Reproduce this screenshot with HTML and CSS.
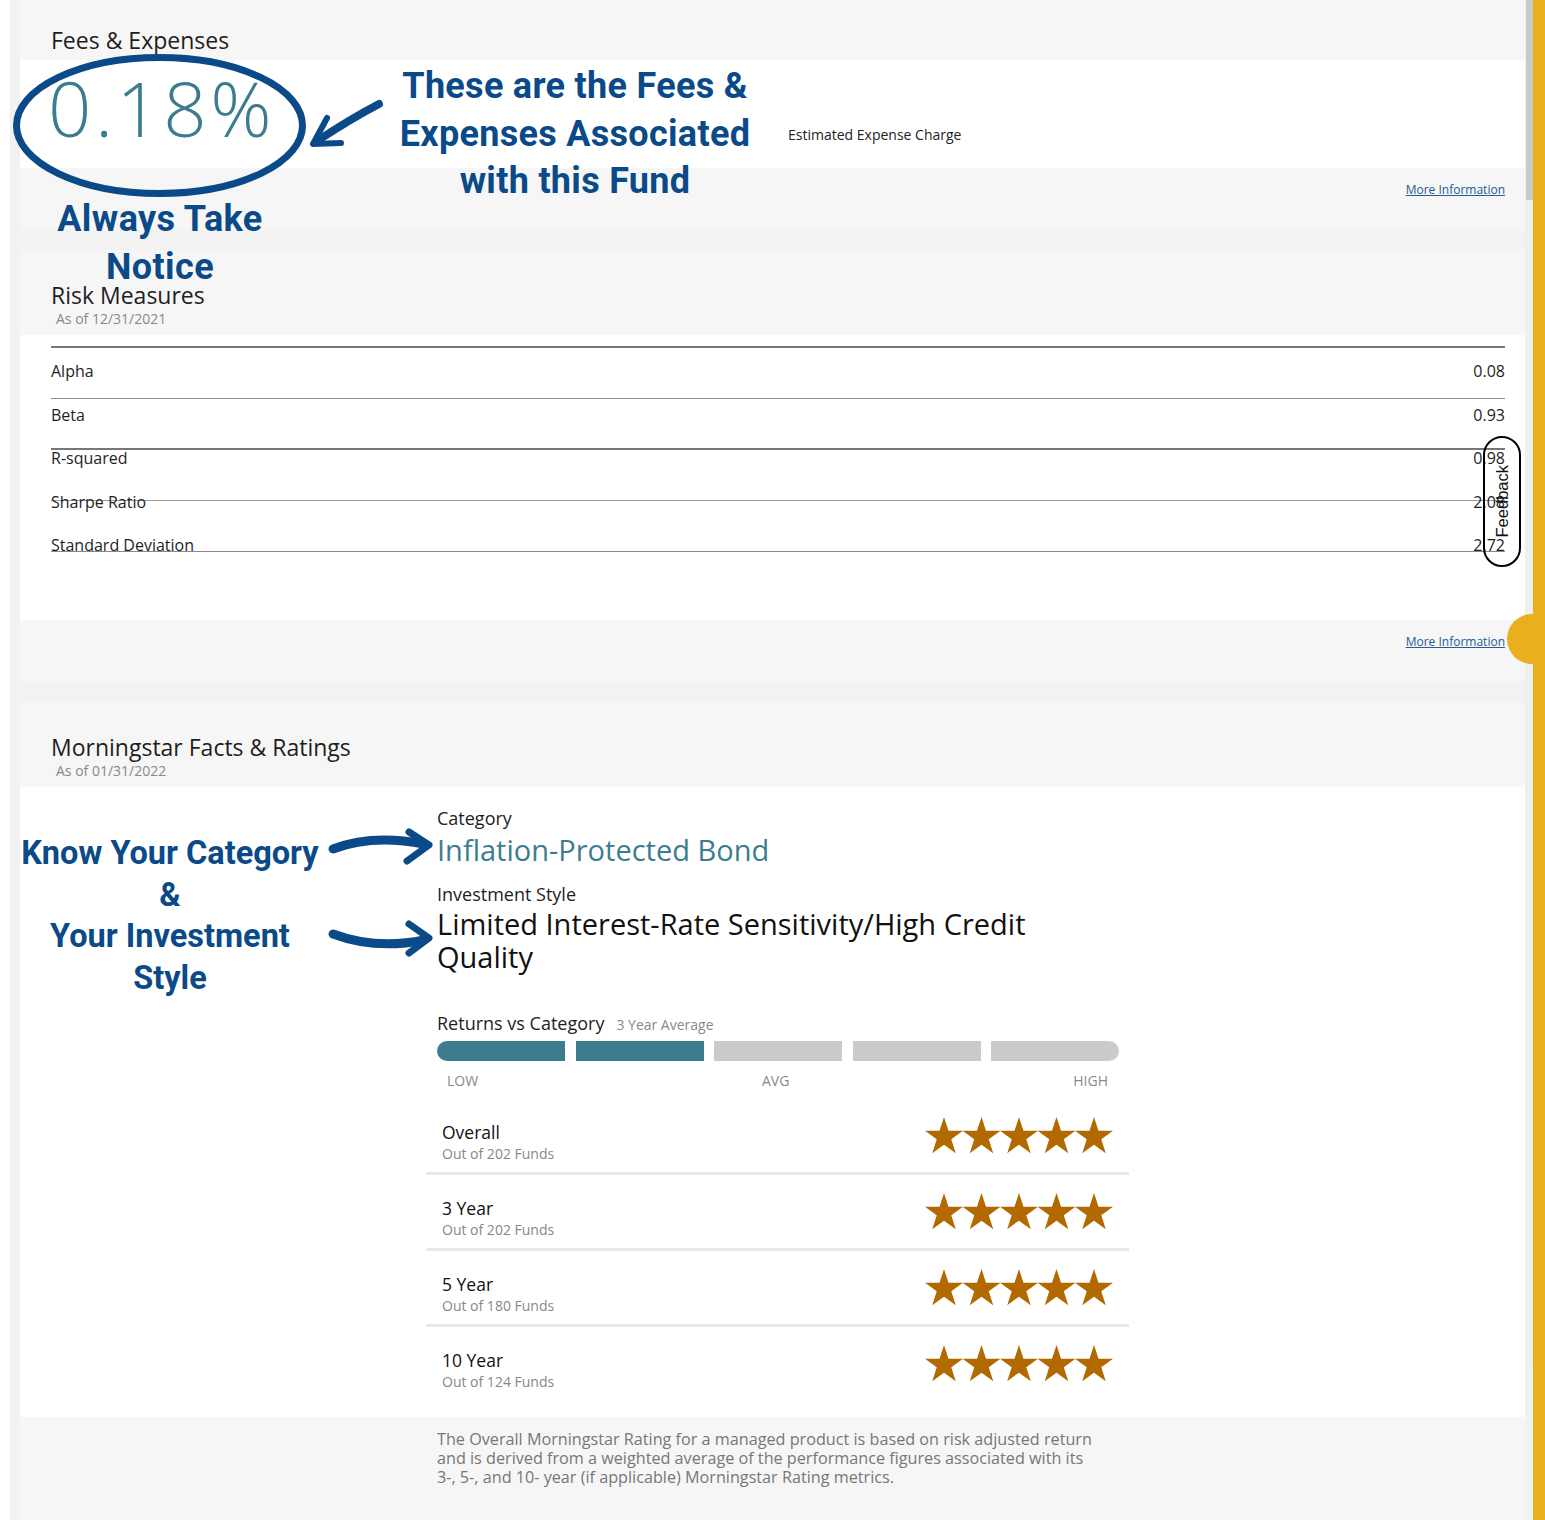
FILE: index.html
```html
<!DOCTYPE html>
<html lang="en">
<head>
<meta charset="utf-8">
<title>Fund Details</title>
<link rel="stylesheet" href="styles.css">
</head>
<body>
<div class="page">
  <div class="edge"></div>
  <div class="frame">
    <main class="content">
      <section class="card">
        <header class="card-head head-short"><h2 class="title">Fees &amp; Expenses</h2></header>
        <div class="card-body fees">
          <div class="ratio">0.18%</div>
          <div class="ratio-label">Estimated Expense Charge</div>
        </div>
        <footer class="card-foot"><a class="more" href="#">More Information</a></footer>
      </section>

      <section class="card">
        <header class="card-head"><h2 class="title">Risk Measures</h2><div class="asof">As of 12/31/2021</div></header>
        <div class="card-body risk-body">
          <div class="risk">
            <div class="risk-lines">
              <div class="rl rl1"></div>
              <div class="rl rl2"></div>
              <div class="rl rl3"></div>
              <div class="rl rl4"></div>
            </div>
            <div class="risk-rows">
              <div class="risk-row"><span>Alpha</span><span>0.08</span></div>
              <div class="risk-row"><span>Beta</span><span>0.93</span></div>
              <div class="risk-row"><span>R-squared</span><span>0.98</span></div>
              <div class="risk-row"><span>Sharpe Ratio</span><span>2.08</span></div>
              <div class="risk-row"><span>Standard Deviation</span><span>2.72</span></div>
            </div>
          </div>
        </div>
        <footer class="card-foot"><a class="more" href="#">More Information</a></footer>
      </section>

      <section class="card">
        <header class="card-head"><h2 class="title">Morningstar Facts &amp; Ratings</h2><div class="asof">As of 01/31/2022</div></header>
        <div class="card-body ms-body">
          <div class="ms-note">Know Your Category<br>&amp;<br>Your Investment<br>Style</div>
          <div class="ms-main">
            <div class="lbl cat-label">Category</div>
            <div class="cat-value">Inflation-Protected Bond</div>
            <div class="lbl style-label">Investment Style</div>
            <div class="style-value">Limited Interest-Rate Sensitivity/High Credit Quality</div>
            <div class="returns-head"><span class="lbl">Returns vs Category</span><span class="avg">3 Year Average</span></div>
            <div class="bar">
              <span class="seg on first"></span>
              <span class="seg on"></span>
              <span class="seg"></span>
              <span class="seg"></span>
              <span class="seg last"></span>
            </div>
            <div class="scale"><span>LOW</span><span>AVG</span><span>HIGH</span></div>
            <div class="ratings">
              <div class="rating">
                <div class="rt-text"><div class="rt-name">Overall</div><div class="rt-sub">Out of 202 Funds</div></div>
                <svg class="stars" viewBox="0 0 188 37" width="188" height="37"><g fill="#b26900"><polygon id="st" points="19,0 23.49,13.82 38,13.82 26.27,22.36 30.76,36.18 19,27.64 7.24,36.18 11.73,22.36 0,13.82 14.51,13.82"/><use href="#st" x="37.5"/><use href="#st" x="75"/><use href="#st" x="112.5"/><use href="#st" x="150"/></g></svg>
              </div>
              <div class="rating">
                <div class="rt-text"><div class="rt-name">3 Year</div><div class="rt-sub">Out of 202 Funds</div></div>
                <svg class="stars" viewBox="0 0 188 37" width="188" height="37"><g fill="#b26900"><use href="#st" x="0"/><use href="#st" x="37.5"/><use href="#st" x="75"/><use href="#st" x="112.5"/><use href="#st" x="150"/></g></svg>
              </div>
              <div class="rating">
                <div class="rt-text"><div class="rt-name">5 Year</div><div class="rt-sub">Out of 180 Funds</div></div>
                <svg class="stars" viewBox="0 0 188 37" width="188" height="37"><g fill="#b26900"><use href="#st" x="0"/><use href="#st" x="37.5"/><use href="#st" x="75"/><use href="#st" x="112.5"/><use href="#st" x="150"/></g></svg>
              </div>
              <div class="rating">
                <div class="rt-text"><div class="rt-name">10 Year</div><div class="rt-sub">Out of 124 Funds</div></div>
                <svg class="stars" viewBox="0 0 188 37" width="188" height="37"><g fill="#b26900"><use href="#st" x="0"/><use href="#st" x="37.5"/><use href="#st" x="75"/><use href="#st" x="112.5"/><use href="#st" x="150"/></g></svg>
              </div>
            </div>
          </div>
        </div>
        <footer class="card-foot ms-foot">
          <p class="disclaimer">The Overall Morningstar Rating for a managed product is based on risk adjusted return and is derived from a weighted average of the performance figures associated with its 3-, 5-, and 10- year (if applicable) Morningstar Rating metrics.</p>
        </footer>
      </section>
    </main>
    <div class="scroll"><div class="thumb"></div></div>
  </div>
  <div class="accent"></div>

  <!-- overlays -->
  <div class="dot"></div>
  <div class="feedback"><span>Feedback</span></div>

  <svg class="marks" width="1545" height="1520" viewBox="0 0 1545 1520">
    <g fill="none" stroke="#0b4a88" stroke-linecap="round" stroke-linejoin="round">
      <ellipse cx="159.5" cy="125.5" rx="143" ry="68" stroke-width="7"/>
      <path d="M379,104 Q352,118 317,141" stroke-width="8"/>
      <path d="M327,118 L313,144 L341,143" stroke-width="6"/>
      <path d="M333,849 Q372,834 424,844" stroke-width="9"/>
      <path d="M409,832 L429,845 L407,861" stroke-width="7"/>
      <path d="M333,934 Q376,950 424,940" stroke-width="9"/>
      <path d="M409,924 L429,938 L409,953" stroke-width="7"/>
    </g>
  </svg>
  <div class="note note-fees">These are the Fees &amp;<br>Expenses Associated<br>with this Fund</div>
  <div class="note note-notice">Always Take<br>Notice</div>
</div>
</body>
</html>
```

FILE: styles.css
```css
* { box-sizing: border-box; }
html, body { margin: 0; padding: 0; overflow: hidden; }
body { width: 1545px; height: 1520px; font-family: "Open Sans", "Noto Sans", sans-serif; color: #222; background: #fff; }

.page { position: relative; display: flex; width: 1545px; height: 1520px; overflow: hidden; }
.edge { width: 10px; flex: none; background: #fff; }
.frame { display: flex; flex: none; width: 1523px; padding-left: 10px; background: #f2f2f2; }
.content { width: 1505px; flex: none; display: flex; flex-direction: column; gap: 20px; }
.scroll { width: 8px; flex: none; background: #efefef; height: 1368px; }
.thumb { height: 200px; background: #cacaca; margin-left: 1px; }
.accent { width: 12px; flex: none; background: #e9af1f; }

.card { display: flex; flex-direction: column; flex: none; }
.card-head { background: #f6f6f6; height: 85px; padding: 30px 0 0 31px; }
.head-short { height: 60px; padding-top: 25px; }
.title { margin: 0; font-size: 23px; line-height: 30px; font-weight: 400; color: #1e1e1e; }
.asof { font-size: 14px; line-height: 19px; color: #888; padding-left: 5px; margin-top: -1px; }
.card-body { background: #fff; }
.card-foot { background: #f6f6f6; height: 62px; padding: 14px 20px 0 0; display: flex; justify-content: flex-end; align-items: flex-start; }
.more { font-size: 12px; line-height: 16px; color: #245c96; text-decoration: underline; }

/* Fees */
.fees { height: 108px; display: flex; align-items: flex-start; padding: 0 0 0 28px; }
.ratio { width: 740px; margin-top: 10px; font-size: 76px; line-height: 76px; font-weight: 300; color: #3b7d8f; letter-spacing: 3.5px; }
.ratio-label { margin-top: 65px; font-size: 14px; line-height: 19px; color: #222; }

/* Risk */
.risk-body { height: 285px; padding: 11px 20px 0 31px; }
.risk { display: grid; }
.risk-lines, .risk-rows { grid-area: 1 / 1; }
.rl { border-bottom: 1px solid #8c8c8c; }
.rl1 { height: 53px; border-top: 2px solid #777; }
.rl2 { height: 51px; border-bottom: 2px solid #777; }
.rl3 { height: 51px; border-bottom-color: #999; }
.rl4 { height: 51px; border-bottom-color: #888; }
.risk-rows { padding-top: 14px; }
.risk-row { height: 43.5px; display: flex; justify-content: space-between; font-size: 16px; line-height: 22px; color: #1e1e1e; }

/* Morningstar */
.ms-body { height: 630px; display: flex; }
.ms-note, .note { font-family: Roboto, "Open Sans", sans-serif; font-weight: 700; color: #0b4a88; text-align: center; }
.ms-note { flex: none; width: 300px; margin-right: 106px; padding-top: 46px; font-size: 32.5px; line-height: 41.7px; }
.ms-main { width: 703px; flex: none; }
.lbl { font-size: 18px; line-height: 22px; color: #1e1e1e; }
.cat-label, .cat-value, .style-label, .style-value, .returns-head { padding-left: 11px; }
.cat-label { margin-top: 20px; }
.cat-value { margin-top: 3px; font-size: 29px; line-height: 36px; color: #3b7d8f; }
.style-label { margin-top: 15px; }
.style-value { margin-top: 2px; font-size: 29px; line-height: 33px; color: #111; max-width: 640px; }
.returns-head { margin-top: 39px; display: flex; align-items: baseline; gap: 12px; }
.avg { font-size: 14px; color: #888; }
.bar { margin: 7px 0 0 11px; width: 682px; height: 20px; display: grid; grid-template-columns: repeat(5, 1fr); gap: 10.5px; }
.seg { background: #cbcbcb; }
.seg.on { background: #3b7d8f; }
.seg.first { border-radius: 10px 0 0 10px; }
.seg.last { border-radius: 0 10px 10px 0; }
.scale { margin: 12px 21px 0 21px; display: flex; justify-content: space-between; font-size: 14px; line-height: 16px; color: #8a8a8a; }
.ratings { margin-top: 10px; }
.rating { display: flex; justify-content: space-between; align-items: flex-start; height: 76px; padding: 22px 16px 0 16px; border-bottom: 3px solid #e8e8e8; }
.rating:last-child { border-bottom: none; }
.rt-name { font-size: 17.5px; line-height: 22px; color: #111; }
.rt-sub { font-size: 14px; line-height: 22px; color: #888; }
.stars { margin-top: -4px; display: block; }

.ms-foot { height: 120px; padding: 13px 0 0 417px; display: block; }
.disclaimer { margin: 0; font-size: 16.2px; line-height: 19px; color: #777; max-width: 663px; }

/* overlays */
.dot { position: absolute; left: 1507px; top: 614px; width: 50px; height: 50px; border-radius: 50%; background: #e9af1f; }
.feedback { position: absolute; left: 1483px; top: 436px; width: 38px; height: 131px; border: 2px solid #000; border-radius: 19px; display: flex; align-items: center; justify-content: center; }
.feedback span { writing-mode: vertical-rl; transform: rotate(180deg); font-family: "Liberation Sans", Arial, sans-serif; font-size: 16.5px; color: #111; }
.marks { position: absolute; left: 0; top: 0; pointer-events: none; }
.note { position: absolute; font-size: 36px; line-height: 47.5px; }
.note-fees { left: 375px; top: 63px; width: 400px; letter-spacing: 0.3px; }
.note-notice { left: 10px; top: 195px; width: 300px; line-height: 48px; letter-spacing: 0.4px; }
```
